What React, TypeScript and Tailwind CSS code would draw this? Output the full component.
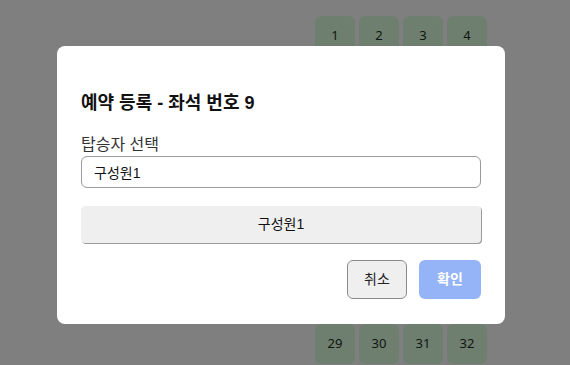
import React from "react";

const font = { fontFamily: '"Liberation Sans", "Noto Sans CJK KR", sans-serif' };

export default function App() {
  const seats = Array.from({ length: 32 }, (_, i) => i + 1);
  return (
    <div className="relative min-h-[365px] w-[570px] bg-white overflow-hidden" style={font}>
      <div className="pl-[315px] pt-4">
        <div className="grid grid-cols-[repeat(4,40px)] gap-1">
          {seats.map((n) => (
            <div
              key={n}
              className="flex h-10 w-10 items-center justify-center rounded-md bg-[#ddfee0] text-[13px] text-[#1f2f22]"
              style={{ fontFamily: '"Noto Sans", sans-serif' }}
            >
              {n}
            </div>
          ))}
        </div>
      </div>
      <div className="fixed inset-0 flex items-center justify-center bg-black/50">
        <div className="mr-[8px] mt-[4px] w-[448px] rounded-lg bg-white px-6 pb-[25px] pt-[43px]">
          <h2 className="text-lg font-bold leading-7 text-[#111]">예약 등록 - 좌석 번호 9</h2>
          <div className="mt-[18px] text-base leading-5 text-[#333]">탑승자 선택</div>
          <input
            readOnly
            value="구성원1"
            className="mt-px block h-8 w-full rounded-md border border-[#9a9a9a] px-3 text-sm text-[#111] outline-none"
            style={font}
          />
          <button className="mt-[18px] block h-[37px] w-full rounded-[4px] bg-[#efefef] text-sm text-[#111] shadow-[1px_1px_0_#9a9a9a]">
            구성원1
          </button>
          <div className="mt-[17px] flex justify-end gap-3">
            <button className="h-[39px] w-[60px] rounded-md border border-[#8a8a8a] bg-[#efefef] text-sm text-[#222]">
              취소
            </button>
            <button className="h-[39px] w-[62px] rounded-md bg-[#94b4f7] text-sm font-bold text-white">
              확인
            </button>
          </div>
        </div>
      </div>
    </div>
  );
}
